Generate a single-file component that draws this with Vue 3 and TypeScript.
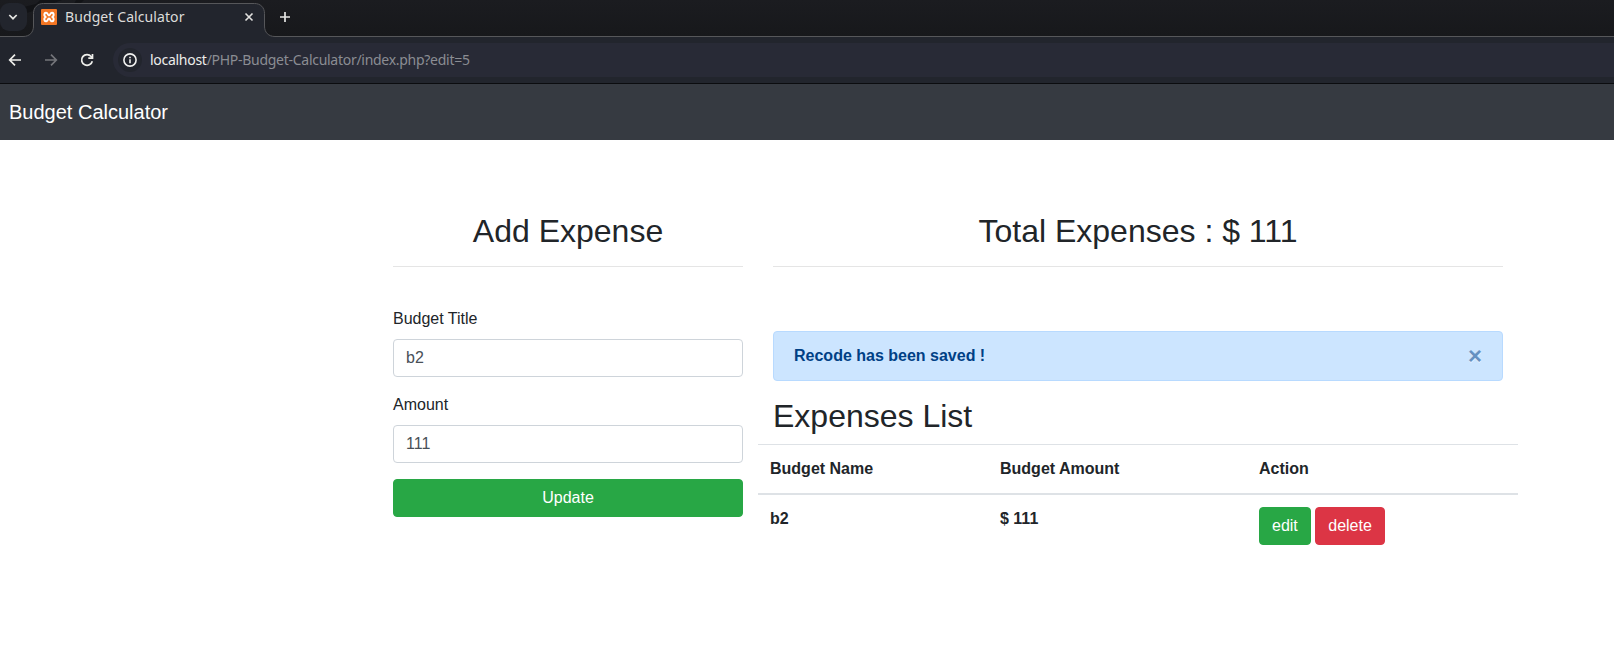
<script setup lang="ts">
import { ref } from 'vue'

interface Expense {
  id: number
  name: string
  amount: number
}

const expenses = ref<Expense[]>([{ id: 5, name: 'b2', amount: 111 }])
const title = ref('b2')
const amount = ref('111')
</script>

<template>
  <div class="browser">
    <header class="tabstrip">
      <svg class="strip-art" width="1614" height="37" viewBox="0 0 1614 37" fill="none">
        <path d="M0 13L36 4L40 0H62L30 12L0 19Z" fill="#121316" />
        <path d="M76 0H84L80 4H74Z" fill="#121316" />
        <path
          d="M0 36.500H23C29.500 36.500 33.500 32.500 33.500 26V13.500C33.500 7.500 37.500 3.500 43.500 3.500H254.500C260.500 3.500 264.500 7.500 264.500 13.500V26C264.500 32.500 268.500 36.500 275 36.500H1614V38H0Z"
          fill="#22252d" stroke="#56575a"
        />
      </svg>
      <button class="tab-search" aria-label="Search tabs">
        <svg width="10" height="10" viewBox="0 0 10 10" fill="none" stroke="#e6e6e3" stroke-width="1.7">
          <path d="M1.300 3L5 6.700L8.700 3" />
        </svg>
      </button>
      <div class="tab">
        <svg width="16" height="16" viewBox="0 0 16 16">
          <rect width="16" height="16" rx="1" fill="#f37623" />
          <path
            d="M5.300 3.700C3.200 3.300 2.500 6.500 4.500 8C2.500 9.500 3.200 12.700 5.300 12.300C7.200 12 6.500 9.600 8 9.600S8.800 12 10.700 12.300C12.800 12.700 13.500 9.500 11.500 8C13.500 6.500 12.800 3.300 10.700 3.700C8.800 4 9.500 6.400 8 6.400S7.200 4 5.300 3.700Z"
            fill="none" stroke="#fff" stroke-width="2"
          />
        </svg>
        <span class="tab-title">Budget Calculator</span>
        <svg class="tab-close" width="10" height="10" viewBox="0 0 10 10" stroke="#e2e2e0" stroke-width="1.600">
          <path d="M1.500 1.500L8.500 8.500M8.500 1.500L1.500 8.500" />
        </svg>
      </div>
      <svg class="new-tab" width="12" height="12" viewBox="0 0 12 12" stroke="#e6e6e3" stroke-width="1.700">
        <path d="M6 1V11M1 6H11" />
      </svg>
    </header>

    <div class="toolbar">
      <svg width="14" height="14" viewBox="0 0 14 14" fill="none" stroke="#eeeeea" stroke-width="1.700">
        <path d="M13 7H2M7 1.700L1.700 7L7 12.300" />
      </svg>
      <svg class="forward" width="14" height="14" viewBox="0 0 14 14" fill="none" stroke="#74757a" stroke-width="1.700">
        <path d="M1 7H12M7 1.700L12.300 7L7 12.300" />
      </svg>
      <svg class="reload" width="14" height="14" viewBox="0 0 14 14" fill="none" stroke="#eeeeea" stroke-width="1.700">
        <path d="M12.300 8.200A5.400 5.400 0 1 1 11.200 3.500L12.500 5" />
        <path d="M12.500 1V5.200H8.300" />
      </svg>
      <div class="omnibox">
        <span class="site-info">
          <svg width="14" height="14" viewBox="0 0 14 14" fill="none" stroke="#f0f0ee" stroke-width="1.600">
            <circle cx="7" cy="7" r="6.100" />
            <path d="M7 6.200V10.200M7 3.700V5.200" />
          </svg>
        </span>
        <span class="url"><span class="host">localhost</span>/PHP-Budget-Calculator/index.php?edit=5</span>
      </div>
    </div>

    <nav class="navbar"><a class="brand">Budget Calculator</a></nav>

    <main class="container">
      <section class="col-form">
        <h2 class="center">Add Expense</h2>
        <hr />
        <form class="form" @submit.prevent>
          <div class="group">
            <label for="title">Budget Title</label>
            <input id="title" v-model="title" type="text" />
          </div>
          <div class="group">
            <label for="amount">Amount</label>
            <input id="amount" v-model="amount" type="text" />
          </div>
          <button class="btn success block">Update</button>
        </form>
      </section>

      <section class="col-list">
        <h2 class="center">Total Expenses : $ 111</h2>
        <hr />
        <div class="alert">
          <strong>Recode has been saved !</strong>
          <button class="close" aria-label="Close">×</button>
        </div>
        <h2>Expenses List</h2>
        <table>
          <colgroup>
            <col class="c-name" />
            <col class="c-amount" />
            <col />
          </colgroup>
          <thead>
            <tr>
              <th>Budget Name</th>
              <th>Budget Amount</th>
              <th>Action</th>
            </tr>
          </thead>
          <tbody>
            <tr v-for="e in expenses" :key="e.id">
              <td>{{ e.name }}</td>
              <td>$ {{ e.amount }}</td>
              <td>
                <div class="actions">
                  <button class="btn success">edit</button>
                  <button class="btn danger">delete</button>
                </div>
              </td>
            </tr>
          </tbody>
        </table>
      </section>
    </main>
  </div>
</template>

<style>
body {
  background: #fff;
}
</style>

<style scoped>
.browser,
.browser * {
  box-sizing: border-box;
}
.browser {
  height: 658px;
  overflow: hidden;
  background: #fff;
  color: #212529;
  font: 16px/1.5 "Liberation Sans", Arial, sans-serif;
}
button {
  margin: 0;
  font: inherit;
}
svg {
  display: block;
  flex: none;
}
.tabstrip {
  position: relative;
  display: flex;
  height: 37px;
  background: linear-gradient(#1b1c20, #17181b);
}
.strip-art {
  position: absolute;
  left: 0;
  top: 0;
}
.tab-search {
  position: relative;
  display: flex;
  align-items: center;
  width: 27px;
  height: 28px;
  margin-top: 3px;
  padding: 0 0 0 8px;
  border: 0;
  border-radius: 9px;
  background: #22252d;
}
.tab {
  position: relative;
  display: flex;
  align-items: center;
  width: 231px;
  height: 28px;
  margin: 3px 0 0 6px;
  padding: 0 10px 0 8px;
}
.tab-title {
  margin-left: 8px;
  color: #dcdcda;
  font: 14px/20px "Noto Sans", sans-serif;
  letter-spacing: 0.09px;
  white-space: nowrap;
}
.tab-close {
  margin-left: auto;
}
.new-tab {
  position: relative;
  margin: 11px 0 0 15px;
}
.toolbar {
  display: flex;
  align-items: center;
  height: 47px;
  padding-left: 8px;
  border-bottom: 1px solid #0b0c0f;
  background: #22252d;
}
.forward {
  margin-left: 22px;
}
.reload {
  margin-left: 22px;
}
.omnibox {
  display: flex;
  flex: 1;
  align-items: center;
  height: 34px;
  margin-left: 19px;
  padding-left: 5px;
  border-radius: 17px 0 0 17px;
  background: #282a36;
}
.site-info {
  display: flex;
  align-items: center;
  justify-content: center;
  width: 24px;
  height: 24px;
  border-radius: 50%;
  background: #22252d;
}
.url {
  margin-left: 8px;
  color: #8b8d93;
  font: 14px/20px "Noto Sans", sans-serif;
  letter-spacing: -0.28px;
}
.host {
  color: #ededeb;
}
.navbar {
  display: flex;
  align-items: center;
  height: 56px;
  padding: 0 9px;
  background: #363a41;
}
.brand {
  color: #fff;
  font-size: 20px;
  line-height: 30px;
}
.container {
  display: flex;
  width: 1140px;
  margin-left: 378px;
  padding-top: 72px;
}
.col-form {
  width: 380px;
  padding: 0 15px;
}
.col-list {
  width: 760px;
  padding: 0 15px;
}
h2 {
  margin: 0 0 8px;
  font-size: 32px;
  font-weight: 400;
  line-height: 1.2;
}
.center {
  text-align: center;
}
hr {
  height: 1px;
  margin: 16px 0;
  border: 0;
  background: #e5e5e5;
}
.form {
  padding-top: 24px;
}
.group {
  margin-bottom: 16px;
}
label {
  display: block;
  margin-bottom: 8px;
}
input {
  display: block;
  width: 100%;
  height: 38px;
  padding: 6px 12px;
  border: 1px solid #ced4da;
  border-radius: 4px;
  background: #fff;
  color: #495057;
  font: inherit;
}
.btn {
  display: block;
  height: 38px;
  padding: 6px 12px;
  border: 1px solid transparent;
  border-radius: 4px;
  color: #fff;
  line-height: 24px;
}
.block {
  width: 100%;
}
.success {
  border-color: #28a745;
  background: #28a745;
}
.danger {
  border-color: #dc3545;
  background: #dc3545;
}
.alert {
  display: flex;
  align-items: center;
  justify-content: space-between;
  height: 50px;
  margin: 64px 0 16px;
  padding: 0 20px;
  border: 1px solid #b8daff;
  border-radius: 4px;
  background: #cce5ff;
  color: #004085;
}
.close {
  padding: 0;
  border: 0;
  background: transparent;
  color: #004085;
  font-size: 24px;
  font-weight: 700;
  line-height: 24px;
  opacity: 0.5;
  text-shadow: 0 1px 0 #fff;
}
table {
  width: 760px;
  margin: 0 -15px;
  border-collapse: collapse;
  table-layout: fixed;
}
.c-name {
  width: 230px;
}
.c-amount {
  width: 259px;
}
th,
td {
  padding: 12px;
  border-top: 1px solid #dee2e6;
  font-weight: 700;
  text-align: left;
  vertical-align: top;
}
th {
  border-bottom: 2px solid #dee2e6;
}
.actions {
  display: flex;
  gap: 4.45px;
  font-weight: 400;
}
</style>
